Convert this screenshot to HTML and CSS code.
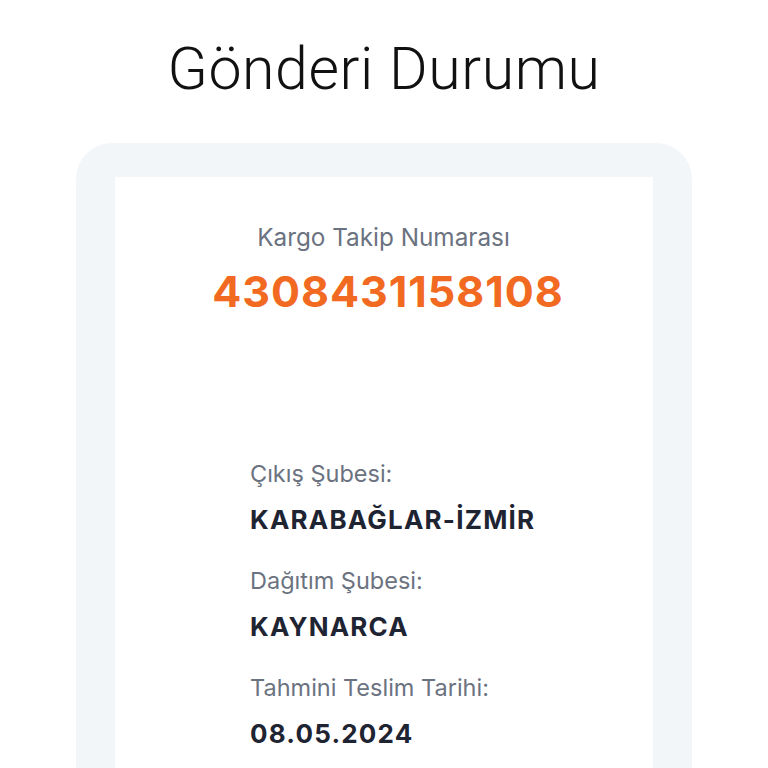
FILE: index.html
```html
<!DOCTYPE html>
<html lang="tr">
<head>
<meta charset="utf-8">
<title>Gönderi Durumu</title>
<link rel="stylesheet" href="styles.css">
</head>
<body>
<div class="page">
  <h1 class="title">Gönderi Durumu</h1>
  <div class="card">
    <div class="inner">
      <div class="track">
        <div class="track-label">Kargo Takip Numarası</div>
        <div class="track-number">4308431158108</div>
      </div>
      <div class="details">
        <div class="item">
          <div class="label">Çıkış Şubesi:</div>
          <div class="value">KARABAĞLAR-İZMİR</div>
        </div>
        <div class="item">
          <div class="label">Dağıtım Şubesi:</div>
          <div class="value">KAYNARCA</div>
        </div>
        <div class="item">
          <div class="label">Tahmini Teslim Tarihi:</div>
          <div class="value">08.05.2024</div>
        </div>
      </div>
    </div>
  </div>
</div>
</body>
</html>
```

FILE: styles.css
```css
html, body {
  margin: 0;
  padding: 0;
  background: #ffffff;
  height: 768px;
  overflow: hidden;
}
.page {
  display: flex;
  flex-direction: column;
  align-items: center;
  height: 768px;
  overflow: hidden;
}
.title {
  margin: 32px 0 0 0;
  font-family: Roboto, "Liberation Sans", sans-serif;
  font-weight: 300;
  font-size: 59px;
  line-height: 74px;
  color: #111111;
  letter-spacing: 0.6px;
}
.card {
  margin-top: 37px;
  width: 616px;
  height: 700px;
  flex-shrink: 0;
  box-sizing: border-box;
  background: #f3f6f9;
  border-radius: 36px;
  padding: 34px 39px 0 39px;
}
.inner {
  background: #ffffff;
  height: 100%;
}
.track {
  padding-top: 45px;
  display: flex;
  flex-direction: column;
  align-items: center;
}
.track-label {
  font-family: Inter, "Liberation Sans", sans-serif;
  font-size: 24.3px;
  line-height: 30px;
  color: #6b7280;
  margin-left: -1px;
}
.track-number {
  margin-top: 14px;
  font-family: Inter, "Liberation Sans", sans-serif;
  font-weight: 700;
  font-size: 43px;
  line-height: 50px;
  letter-spacing: 1px;
  color: #f26a21;
  margin-left: 8px;
}
.details {
  margin-top: 143px;
  padding-left: 135px;
  display: flex;
  flex-direction: column;
  gap: 31px;
}
.label {
  font-family: Inter, "Liberation Sans", sans-serif;
  font-size: 23.5px;
  line-height: 30px;
  color: #6b7280;
}
.value {
  margin-top: 16px;
  font-family: Inter, "Liberation Sans", sans-serif;
  font-weight: 700;
  font-size: 26px;
  line-height: 30px;
  letter-spacing: 1.2px;
  color: #1f2433;
}
```
